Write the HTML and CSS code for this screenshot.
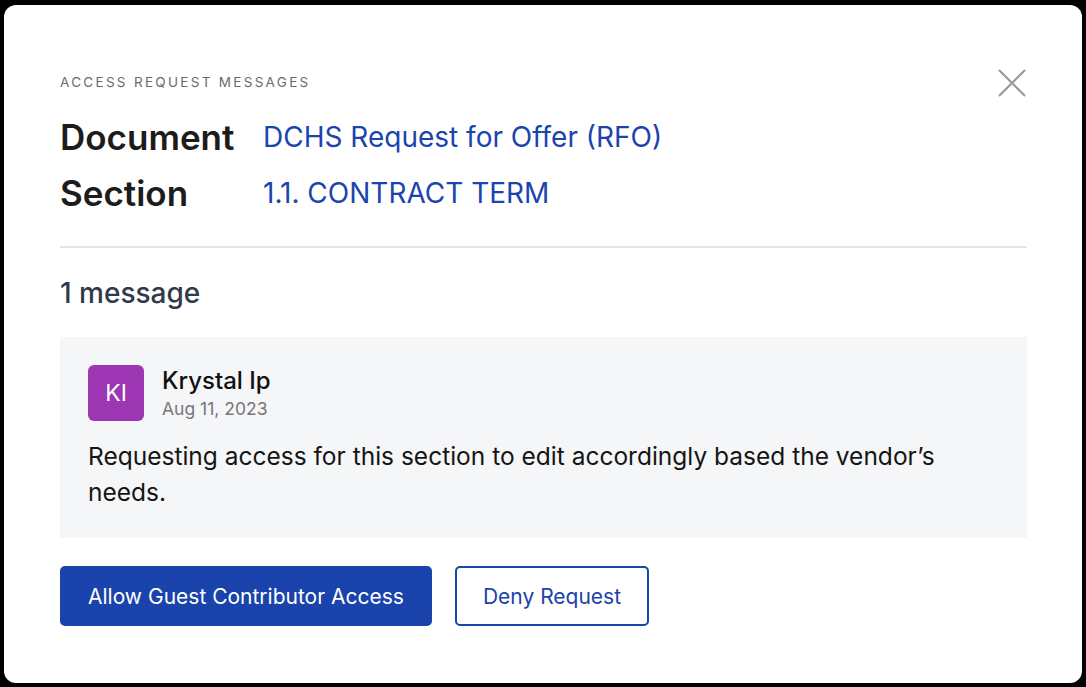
FILE: index.html
```html
<!DOCTYPE html>
<html lang="en">
<head>
    <meta charset="UTF-8">
    <meta name="viewport" content="width=device-width, initial-scale=1.0">
    <title>Access Request Messages</title>
    <link rel="stylesheet" href="styles.css">
</head>
<body>

    <div class="dialog">
        <div class="dialog-head">
            <div class="eyebrow">Access Request Messages</div>
            <button class="close-btn" aria-label="Close">
                <svg width="30" height="30" viewBox="0 0 30 30">
                    <path d="M2 2 L28 28 M28 2 L2 28" stroke="#9a9a9a" stroke-width="2.2" fill="none"/>
                </svg>
            </button>
        </div>

        <div class="meta-row">
            <span class="meta-label">Document</span>
            <a class="meta-value" href="#">DCHS Request for Offer (RFO)</a>
        </div>
        <div class="meta-row">
            <span class="meta-label">Section</span>
            <a class="meta-value" href="#">1.1. CONTRACT TERM</a>
        </div>

        <hr class="divider">

        <div class="count">1 message</div>

        <div class="message">
            <div class="author">
                <div class="avatar">KI</div>
                <div>
                    <div class="author-name">Krystal Ip</div>
                    <div class="author-date">Aug 11, 2023</div>
                </div>
            </div>
            <p class="message-text">Requesting access for this section to edit accordingly based the vendor’s needs.</p>
        </div>

        <div class="actions">
            <button class="btn btn-primary">Allow Guest Contributor Access</button>
            <button class="btn btn-outline">Deny Request</button>
        </div>
    </div>

</body>
</html>
```

FILE: styles.css
```css
body {
    margin: 0;
    padding: 5px 4px 4px 4px;
    background-color: #000;
    font-family: Inter, "Noto Sans", sans-serif;
    box-sizing: border-box;
    height: 687px;
}

.dialog {
    background-color: #fff;
    border-radius: 12px;
    height: 100%;
    box-sizing: border-box;
    padding: 69px 55px 0 56px;
}

.dialog-head {
    display: flex;
    justify-content: space-between;
    align-items: flex-start;
    height: 35px;
}

.eyebrow {
    font-size: 13.5px;
    letter-spacing: 2.3px;
    text-transform: uppercase;
    color: #6b6b6b;
    line-height: 16px;
}

.close-btn {
    background: none;
    border: none;
    padding: 0;
    margin-top: -6px;
    cursor: pointer;
}

.meta-row {
    display: flex;
    align-items: center;
    height: 56px;
}

.meta-label {
    width: 203px;
    font-size: 35px;
    font-weight: 600;
    color: #1c1c1c;
}

.meta-value {
    font-size: 28px;
    color: #1b44ad;
    text-decoration: none;
}

.divider {
    border: none;
    border-top: 2px solid #e6e6e6;
    margin: 25px 0 0 0;
}

.count {
    font-size: 28px;
    font-weight: 500;
    color: #2f3a4b;
    margin: 28px 0 27px 0;
    line-height: 34px;
}

.message {
    background-color: #f5f6f8;
    padding: 28px 28px 28px 28px;
}

.author {
    display: flex;
    align-items: center;
    gap: 18px;
}

.avatar {
    width: 56px;
    height: 56px;
    border-radius: 6px;
    background-color: #9d36b3;
    color: #fff;
    font-size: 23px;
    display: flex;
    align-items: center;
    justify-content: center;
}

.author-name {
    font-size: 24px;
    font-weight: 500;
    color: #111;
    line-height: 28px;
}

.author-date {
    font-size: 17.5px;
    color: #777;
    line-height: 22px;
    margin-top: 3px;
}

.message-text {
    font-size: 24.5px;
    line-height: 36px;
    color: #151515;
    margin: 17px 0 0 0;
}

.actions {
    display: flex;
    gap: 23px;
    margin-top: 28px;
}

.btn {
    font-family: inherit;
    font-size: 21px;
    height: 60px;
    border-radius: 5px;
    padding: 0 28px;
    cursor: pointer;
}

.btn-primary {
    background-color: #1a43ab;
    color: #fff;
    border: none;
}

.btn-outline {
    background-color: #fff;
    color: #1a43ab;
    border: 2px solid #1a43ab;
    padding: 0 26px;
}
```
